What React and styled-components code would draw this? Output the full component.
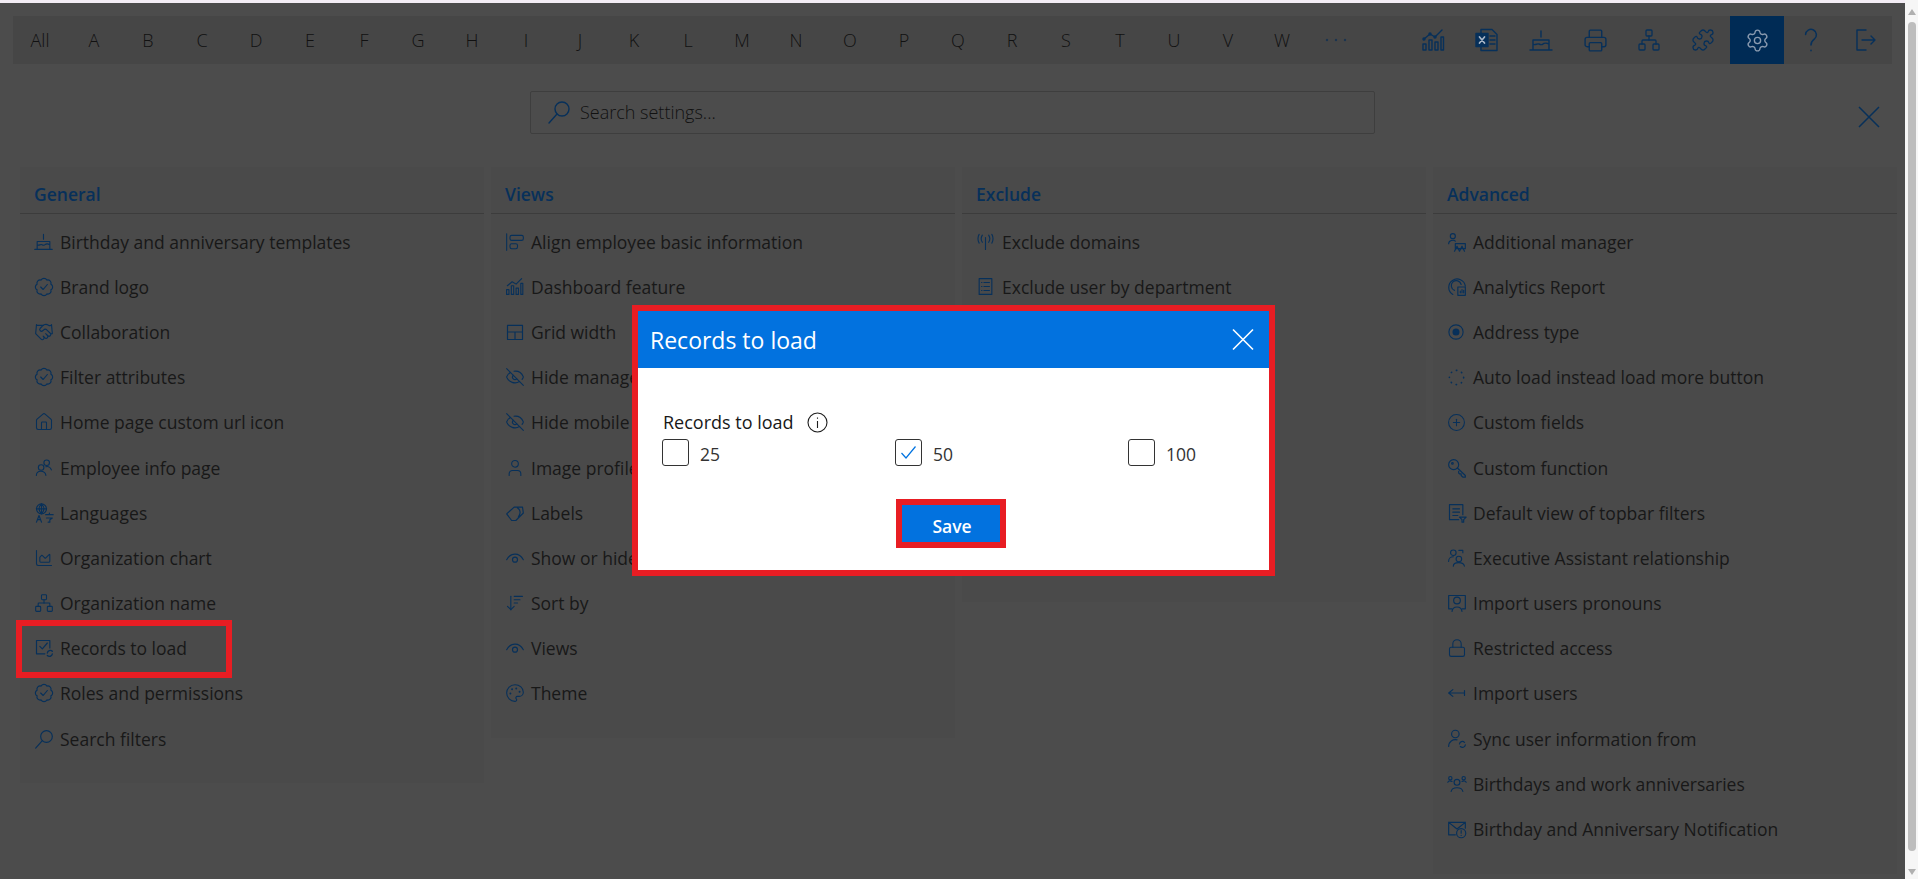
import React from 'react'
import styled, {createGlobalStyle} from 'styled-components'
import {
  ArrowDownWideNarrow, AlignStartVertical, ChartArea, CirclePlus, EyeOff, Handshake,
  House, Lock, Network, Palette, Printer, Puzzle, Settings, User,
} from 'lucide-react'

const FONT = '"Open Sans", "Noto Sans", sans-serif'
const BLUE = '#07305a'
const INK = '#181818'

const GlobalStyle = createGlobalStyle`
  html, body { margin: 0; padding: 0; height: 100%; overflow: hidden; background: #4c4c4c; }
  body { font-family: ${FONT}; color: ${INK}; }
  *, *::before, *::after { box-sizing: border-box; }
`

// hand drawn icons, all on the same 24 grid as lucide
const Svg = ({children, size = 22}) => (
  <svg width={size} height={size} viewBox="0 0 24 24" fill="none" stroke="currentColor" strokeWidth="1.4" strokeLinecap="round" strokeLinejoin="round">
    {children}
  </svg>
)

// scalloped edge for the badge icon
const scallops = (() => {
  const pts = Array.from({length: 8}, (_, i) => {
    const a = (i * Math.PI) / 4 + Math.PI / 8
    return [12 + 9 * Math.cos(a), 12 + 9 * Math.sin(a)]
  })
  return `M${pts[0].join(' ')} ` + pts.slice(1).concat([pts[0]]).map((p) => `A3.9 3.9 0 0 1 ${p.join(' ')}`).join(' ') + 'Z'
})()

const BadgeIcon = (p) => <Svg {...p}><path d={scallops} /><path d="M8 12l3 3 5-6" /></Svg>
const CakeIcon = (p) => <Svg {...p}><path d="M12 3v6M4 12h16v10H4zM4 16c2 2 4-1 6 0s3 1 4 0 4-1 6 0M1 22h22" /></Svg>
const ChartIcon = (p) => <Svg {...p}><path d="M2 22v-6h3v6zM8 22V12h3v10zM14 22v-8h3v8zM20 22V9h2.5v13zM3 11l6-5 5 3 7-7" /><circle cx="3" cy="11" r="1" /><circle cx="9" cy="6" r="1" /><circle cx="14" cy="9" r="1" /></Svg>
const ExcelIcon = (p) => <Svg {...p}><path d="M6 5V1.5h11l5 5v16H6V19M15 8h5M15 12h5M15 16h5" /><rect x="1" y="5.5" width="12" height="13" fill="currentColor" /><path d="M4.5 9l5 6M9.5 9l-5 6" stroke="#a9b6c6" strokeWidth="1.7" /></Svg>
const QuestionIcon = (p) => <Svg {...p}><path d="M7 7a5 5 0 1 1 8 4.2c-2 1.5-3 2.5-3 5.3M12 21.5v.5" /></Svg>
const ExitIcon = (p) => <Svg {...p}><path d="M13 2H4v20h9M9 12h13M18 8l4 4-4 4" /></Svg>
const SearchIcon = (p) => <Svg {...p}><circle cx="15" cy="9" r="7" /><path d="M10 14l-8 9" /></Svg>
const PeopleIcon = (p) => <Svg {...p}><circle cx="16" cy="6" r="3.5" /><circle cx="9" cy="12" r="3.5" /><path d="M3 22c0-7 11-7 12 0M15 11c3-1 6 1 7 4" /></Svg>
const GlobeIcon = (p) => <Svg {...p}><circle cx="9" cy="7" r="6" /><path d="M3 7h12M9 1v12M9 1c-4 4-4 8 0 12M9 1c4 4 4 8 0 12M3 23l3-8 3 8M4.2 20h3.6M14 14h9M18.5 12v2M15 18h7l-3 2v3h-2" /></Svg>
const RecordsIcon = (p) => <Svg {...p}><path d="M13 19H3V3h16v9M7 10l3 3 6-7" /><path d="M16 18a3.5 3.5 0 0 1 6-2M22 19a3.5 3.5 0 0 1-6 2" strokeWidth="1.6" /></Svg>
const DashIcon = (p) => <Svg {...p}><path d="M2 22v-6h3v6zM8 22V11h3v11zM14 22v-8h3v8zM20 22V8h2.5v14zM3 11l6-5 5 3 7-7" /></Svg>
const GridIcon = (p) => <Svg {...p}><path d="M3 4h18v17H3zM3 12h18M12 12v9" /></Svg>
const TagIcon = (p) => <Svg {...p}><path d="M2 13l9-8h10l1 7-9 9h-5zM15 6c4 2 4 7 1 11" /></Svg>
const ArcEyeIcon = (p) => <Svg {...p}><path d="M2 14C7 5 17 5 22 14" /><circle cx="12" cy="14" r="3" /></Svg>
const AntennaIcon = (p) => <Svg {...p}><path d="M12 7v15M8 4c-2 3-2 6 0 9M16 4c2 3 2 6 0 9M4 3c-2 3-2 8 0 11M20 3c2 3 2 8 0 11" /></Svg>
const DocIcon = (p) => <Svg {...p}><path d="M4 2h16v20H4zM10 7h7M10 12h7M10 17h7M7 7h.5M7 12h.5M7 17h.5" /></Svg>
const ManagerIcon = (p) => <Svg {...p}><circle cx="7" cy="5" r="3" /><path d="M2 14c0-4 6-5 8-3M10 14h12v6H10zM9 23l3-6 3 6M15 23l3-6 3 6" /></Svg>
const AnalyticsIcon = (p) => <Svg {...p}><path d="M7 21A10 10 0 1 1 22 11M9 16a6 6 0 1 1 8-7" /><path d="M13 12h9v10h-9zM16 19v-2M18 19v-4M20 19v-3" /></Svg>
const DotCircleIcon = (p) => <Svg {...p}><circle cx="12" cy="12" r="9.5" strokeWidth="1.5" /><circle cx="12" cy="12" r="4" fill="currentColor" /></Svg>
const SpinnerIcon = (p) => <Svg {...p}><circle cx="12" cy="12" r="9" strokeWidth="2" strokeDasharray="0.5 6.5" /></Svg>
const KeyIcon = (p) => <Svg {...p}><circle cx="8" cy="8" r="6" /><path d="M12.5 12L22 21v2h-3l-2-2v-2h-2l-1-1v-2" /><circle cx="6.5" cy="6.5" r="1" /></Svg>
const FilterDocIcon = (p) => <Svg {...p}><path d="M14 20H3V2h16v12M7 7h8M7 11h8M7 15h6M15 17h8l-3 3v3h-2v-3z" /></Svg>
const AssistantIcon = (p) => <Svg {...p}><circle cx="8" cy="6" r="3.5" /><circle cx="15" cy="14" r="3.5" /><path d="M2 17c0-4 3-6 6-6M8 23c0-6 13-6 14 0M15 3h5v3" /></Svg>
const FrameUserIcon = (p) => <Svg {...p}><path d="M6 19H2V3h20v16h-4" /><circle cx="12" cy="9" r="4" /><path d="M6 22c1-7 11-7 12 0" /></Svg>
const BackArrowIcon = (p) => <Svg {...p}><path d="M2 12h19M21 9v6M2 12l5-4M2 12l5 4" /></Svg>
const SyncUserIcon = (p) => <Svg {...p}><circle cx="10" cy="6" r="4.5" /><path d="M2 21c0-6 5-9 10-8M15 18a3.5 3.5 0 0 1 6-2M22 19a3.5 3.5 0 0 1-6 2" /></Svg>
const GroupIcon = (p) => <Svg {...p}><circle cx="12" cy="10" r="3.5" /><circle cx="4" cy="5" r="2" /><circle cx="20" cy="5" r="2" /><path d="M5 21c1-6 13-6 14 0M1 10c1-2 3-2 5-1M23 10c-1-2-3-2-5-1" /></Svg>
const MailClockIcon = (p) => <Svg {...p}><path d="M10 19H2V4h20v7M2 4l10 8 10-8" /><circle cx="17" cy="17" r="5.5" /><path d="M17 14v3M17 19.5v.2" /></Svg>

const lucide = (Icon, size = 20) => <Icon size={size} strokeWidth={1.3} />

const columns = [
  {
    title: 'General',
    rows: [
      {label: 'Birthday and anniversary templates', icon: <CakeIcon size={19} />},
      {label: 'Brand logo', icon: <BadgeIcon size={20} />},
      {label: 'Collaboration', icon: lucide(Handshake)},
      {label: 'Filter attributes', icon: <BadgeIcon size={20} />},
      {label: 'Home page custom url icon', icon: lucide(House)},
      {label: 'Employee info page', icon: <PeopleIcon size={19} />},
      {label: 'Languages', icon: <GlobeIcon size={20} />},
      {label: 'Organization chart', icon: lucide(ChartArea)},
      {label: 'Organization name', icon: lucide(Network)},
      {label: 'Records to load', icon: <RecordsIcon size={20} />, marked: true},
      {label: 'Roles and permissions', icon: <BadgeIcon size={20} />},
      {label: 'Search filters', icon: <SearchIcon size={20} />},
    ],
  },
  {
    title: 'Views',
    rows: [
      {label: 'Align employee basic information', icon: lucide(AlignStartVertical)},
      {label: 'Dashboard feature', icon: <DashIcon size={19} />},
      {label: 'Grid width', icon: <GridIcon size={20} />},
      {label: 'Hide manager details', icon: lucide(EyeOff)},
      {label: 'Hide mobile number', icon: lucide(EyeOff)},
      {label: 'Image profile', icon: lucide(User)},
      {label: 'Labels', icon: <TagIcon size={20} />},
      {label: 'Show or hide', icon: <ArcEyeIcon size={20} />},
      {label: 'Sort by', icon: lucide(ArrowDownWideNarrow)},
      {label: 'Views', icon: <ArcEyeIcon size={20} />},
      {label: 'Theme', icon: lucide(Palette)},
    ],
  },
  {
    title: 'Exclude',
    minHeight: 435,
    rows: [
      {label: 'Exclude domains', icon: <AntennaIcon size={19} />},
      {label: 'Exclude user by department', icon: <DocIcon size={19} />},
    ],
  },
  {
    title: 'Advanced',
    rows: [
      {label: 'Additional manager', icon: <ManagerIcon size={20} />},
      {label: 'Analytics Report', icon: <AnalyticsIcon size={20} />},
      {label: 'Address type', icon: <DotCircleIcon size={18} />},
      {label: 'Auto load instead load more button', icon: <SpinnerIcon size={19} />},
      {label: 'Custom fields', icon: lucide(CirclePlus, 19)},
      {label: 'Custom function', icon: <KeyIcon size={20} />},
      {label: 'Default view of topbar filters', icon: <FilterDocIcon size={20} />},
      {label: 'Executive Assistant relationship', icon: <AssistantIcon size={19} />},
      {label: 'Import users pronouns', icon: <FrameUserIcon size={20} />},
      {label: 'Restricted access', icon: lucide(Lock)},
      {label: 'Import users', icon: <BackArrowIcon size={20} />},
      {label: 'Sync user information from', icon: <SyncUserIcon size={20} />},
      {label: 'Birthdays and work anniversaries', icon: <GroupIcon size={20} />},
      {label: 'Birthday and Anniversary Notification', icon: <MailClockIcon size={20} />},
    ],
  },
]

const letters = ['All', ...'ABCDEFGHIJKLMNOPQRSTUVW'.split('')]
const tools = [
  {key: 'chart', icon: <ChartIcon size={24} />},
  {key: 'excel', icon: <ExcelIcon size={24} />},
  {key: 'cake', icon: <CakeIcon size={24} />},
  {key: 'print', icon: lucide(Printer, 25)},
  {key: 'org', icon: lucide(Network, 24)},
  {key: 'puzzle', icon: lucide(Puzzle, 24)},
  {key: 'gear', icon: lucide(Settings, 25), active: true},
  {key: 'help', icon: <QuestionIcon size={26} />},
  {key: 'exit', icon: <ExitIcon size={24} />},
]

function App() {
  return (
    <Shell>
      <GlobalStyle />
      <Main>
        <TopStrip />
        <Toolbar>
          <Letters>
            {letters.map((l) => <Letter key={l}>{l}</Letter>)}
            <Letter>
              <svg width="24" height="4" viewBox="0 0 24 4" fill="#1c3550"><circle cx="3" cy="2" r="1.2" /><circle cx="12" cy="2" r="1.2" /><circle cx="21" cy="2" r="1.2" /></svg>
            </Letter>
          </Letters>
          <Tools>
            {tools.map((t) => <Tool key={t.key} $active={t.active}>{t.icon}</Tool>)}
          </Tools>
        </Toolbar>
        <SearchRow>
          <SearchBox>
            <SearchGlyph><SearchIcon size={24} /></SearchGlyph>
            <SearchText>Search settings...</SearchText>
          </SearchBox>
          <CloseAll>
            <svg width="24" height="22" viewBox="0 0 24 22" fill="none" stroke="currentColor" strokeWidth="1.5"><path d="M2 1l20 20M22 1L2 21" /></svg>
          </CloseAll>
        </SearchRow>
        <Columns>
          {columns.map((col) => (
            <Panel key={col.title} $minHeight={col.minHeight}>
              <PanelTitle>{col.title}</PanelTitle>
              <RowList>
                {col.rows.map((row) => (
                  <Row key={row.label} $marked={row.marked}>
                    <RowIcon>{row.icon}</RowIcon>
                    <span>{row.label}</span>
                  </Row>
                ))}
              </RowList>
            </Panel>
          ))}
        </Columns>
        <Dialog>
          <DialogHead>
            <DialogTitle>Records to load</DialogTitle>
            <svg width="24" height="23" viewBox="0 0 24 23" fill="none" stroke="#fff" strokeWidth="1.6"><path d="M2 1.5l20 20M22 1.5l-20 20" /></svg>
          </DialogHead>
          <DialogBody>
            <FieldLabel>
              <span>Records to load</span>
              <svg width="21" height="21" viewBox="0 0 21 21" fill="none" stroke="#1d1d1d" strokeWidth="1.1"><circle cx="10.5" cy="10.5" r="9.5" /><path d="M10.5 9v7M10.5 5.5v1.2" /></svg>
            </FieldLabel>
            <Options>
              {[['25', false], ['50', true], ['100', false]].map(([v, on]) => (
                <Option key={v}>
                  <CheckBox>
                    {on && <svg width="17" height="15" viewBox="0 0 17 15" fill="none" stroke="#0073e0" strokeWidth="1.2"><path d="M1.5 8l4.5 5L15.5 1.5" /></svg>}
                  </CheckBox>
                  <OptionText>{v}</OptionText>
                </Option>
              ))}
            </Options>
            <SaveRow>
              <SaveButton>Save</SaveButton>
            </SaveRow>
          </DialogBody>
        </Dialog>
      </Main>
      <ScrollTrack>
        <ArrowUp />
        <ScrollThumb />
        <ArrowDown />
      </ScrollTrack>
    </Shell>
  )
}

const Shell = styled.div`
  display: flex;
  height: 100vh;
  overflow: hidden;
`

const Main = styled.div`
  position: relative;
  flex: 1;
  min-width: 0;
  background: #4c4c4c;
`

const TopStrip = styled.div`
  height: 3px;
  background: #f3edf5;
`

const Toolbar = styled.div`
  display: flex;
  justify-content: space-between;
  height: 48px;
  margin: 13px 13px 0;
  background: #464646;
`

const Letters = styled.div`
  display: flex;
`

const Letter = styled.div`
  width: 54px;
  display: flex;
  align-items: center;
  justify-content: center;
  font-size: 18px;
  font-weight: 300;
  color: #111;
`

const Tools = styled.div`
  display: flex;
`

const Tool = styled.div`
  width: 54px;
  display: flex;
  align-items: center;
  justify-content: center;
  color: ${(p) => (p.$active ? '#8a9bb0' : BLUE)};
  background: ${(p) => (p.$active ? '#002b55' : 'transparent')};
`

const SearchRow = styled.div`
  display: grid;
  grid-template-columns: 1fr 845px 1fr;
  margin-top: 27px;
`

const SearchBox = styled.div`
  grid-column: 2;
  height: 43px;
  display: flex;
  align-items: center;
  gap: 9px;
  padding: 0 0 1px 16px;
  border: 1px solid #3e3e3e;
  border-radius: 2px;
`

const SearchGlyph = styled.span`
  display: flex;
  color: ${BLUE};
`

const SearchText = styled.span`
  font-size: 18px;
  font-weight: 300;
  color: #111;
`

const CloseAll = styled.div`
  justify-self: end;
  margin: 15px 24px 0 0;
  color: ${BLUE};
`

const Columns = styled.div`
  display: grid;
  grid-template-columns: repeat(4, 464px);
  gap: 7px;
  align-items: start;
  margin: 33px 0 0 20px;
`

const Panel = styled.section`
  background: #4a4a4a;
  padding-bottom: 22px;
  min-height: ${(p) => (p.$minHeight ? `${p.$minHeight}px` : 'auto')};
`

const PanelTitle = styled.h2`
  margin: 0;
  height: 47px;
  padding: 15px 0 0 14px;
  font-size: 17.5px;
  line-height: 24px;
  font-weight: 600;
  color: ${BLUE};
  border-bottom: 1px solid #3c3c3c;
`

const RowList = styled.div`
  padding-top: 5px;
`

const Row = styled.div`
  position: relative;
  height: 45.2px;
  display: flex;
  align-items: center;
  padding-left: 14px;
  font-size: 17.5px;
  color: ${INK};
  &::after {
    content: '';
    display: ${(p) => (p.$marked ? 'block' : 'none')};
    position: absolute;
    left: -4px;
    top: -6px;
    width: 216px;
    height: 58px;
    border: 6px solid #e81d23;
  }
`

const RowIcon = styled.span`
  width: 26px;
  flex: none;
  display: flex;
  color: ${BLUE};
`

const Dialog = styled.div`
  position: absolute;
  left: 632px;
  top: 305px;
  width: 643px;
  height: 271px;
  border: 6px solid #e81d23;
  background: #fff;
`

const DialogHead = styled.div`
  height: 57px;
  display: flex;
  align-items: center;
  justify-content: space-between;
  padding: 0 14px 0 12px;
  background: #0272df;
`

const DialogTitle = styled.div`
  font-size: 23px;
  color: #fff;
`

const DialogBody = styled.div`
  padding: 42px 0 0 24px;
`

const FieldLabel = styled.div`
  display: flex;
  align-items: center;
  gap: 13px;
  height: 24px;
  padding-left: 1px;
  font-size: 18px;
  font-weight: 500;
  color: ${INK};
`

const Options = styled.div`
  display: grid;
  grid-template-columns: repeat(3, 233px);
  margin-top: 5px;
`

const Option = styled.div`
  display: flex;
  align-items: center;
  gap: 11px;
  font-size: 17.5px;
  color: #333;
`

const OptionText = styled.span`
  padding-top: 2px;
`

const CheckBox = styled.span`
  width: 27px;
  height: 27px;
  display: flex;
  align-items: center;
  justify-content: center;
  border: 1px solid #333;
  border-radius: 3px;
`

const SaveRow = styled.div`
  display: flex;
  justify-content: center;
  margin: 33px 29px 0 0;
`

const SaveButton = styled.button`
  width: 110px;
  height: 49px;
  padding: 5px 0 0 2px;
  border: 6px solid #e81d23;
  background: #0272df;
  color: #fff;
  font-family: ${FONT};
  font-size: 17.5px;
  font-weight: 600;
`

const ScrollTrack = styled.div`
  width: 13px;
  flex: none;
  display: flex;
  flex-direction: column;
  align-items: center;
  padding: 9px 0 4px;
  background: #f6f6f6;
`

const ArrowUp = styled.div`
  border: 4px solid transparent;
  border-top: 0;
  border-bottom: 6px solid #b0b0b0;
`

const ArrowDown = styled.div`
  border: 4px solid transparent;
  border-bottom: 0;
  border-top: 6px solid #b0b0b0;
`

const ScrollThumb = styled.div`
  flex: 1;
  width: 8px;
  margin: 7px 0 18px;
  border-radius: 4px;
  background: #bdbdbd;
`

export default App
